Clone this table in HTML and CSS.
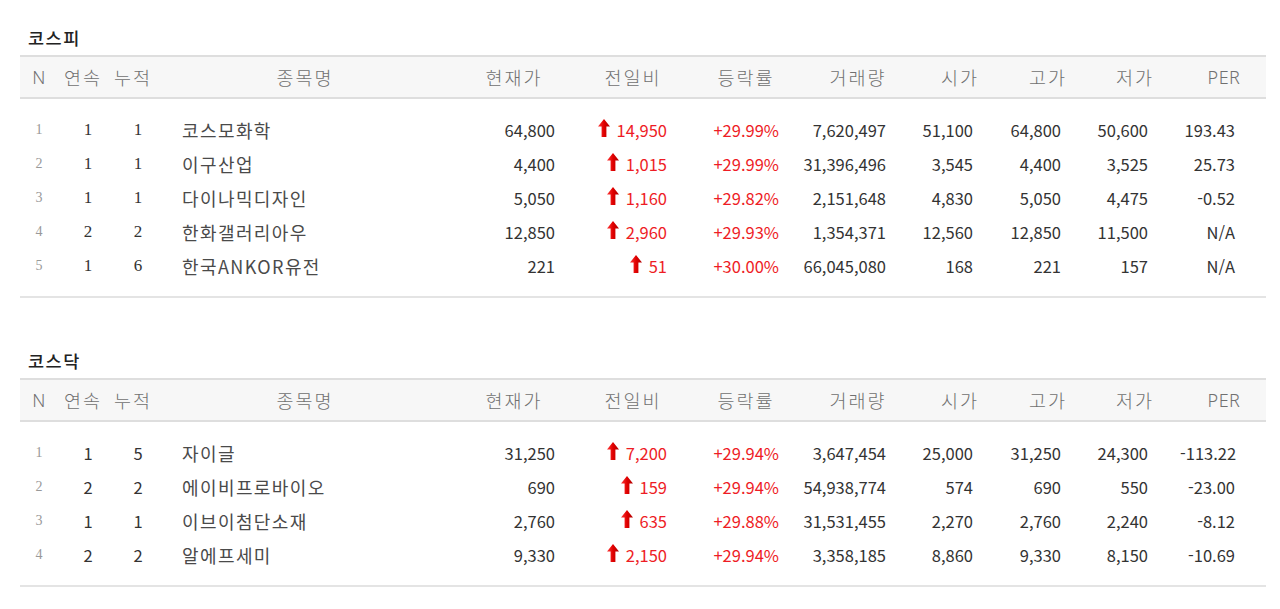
FILE: index.html
```html
<!DOCTYPE html>
<html lang="ko">
<head>
<meta charset="utf-8">
<title>상한가</title>
<link rel="stylesheet" href="styles.css">
</head>
<body>
<svg width="0" height="0" class="defs" aria-hidden="true">
  <defs>
    <linearGradient id="upg" x1="0" y1="0" x2="1" y2="0">
      <stop offset="0" stop-color="#ff3a3a"/>
      <stop offset="0.5" stop-color="#e00000"/>
      <stop offset="1" stop-color="#b00000"/>
    </linearGradient>
    <symbol id="up" viewBox="0 0 12 18">
      <path d="M6 0 L12 7.5 L8.4 7.5 L8.4 18 L3.6 18 L3.6 7.5 L0 7.5 Z" fill="url(#upg)"/>
    </symbol>
  </defs>
</svg>

<div class="page">
  <section class="board board--serif">
    <h2 class="board-title">코스피</h2>
    <div class="grid head">
      <div class="h-n">N</div><div>연속</div><div>누적</div><div>종목명</div><div>현재가</div><div>전일비</div><div>등락률</div><div>거래량</div><div>시가</div><div>고가</div><div>저가</div><div class="h-n">PER</div>
    </div>
    <div class="body">
      <div class="grid row"><div class="c-n">1</div><div class="c-cnt">1</div><div class="c-cnt">1</div><div class="c-name">코스모화학</div><div class="c-num">64,800</div><div class="c-chg"><svg class="arrow"><use href="#up"/></svg>14,950</div><div class="c-rate">+29.99%</div><div class="c-num">7,620,497</div><div class="c-num">51,100</div><div class="c-num">64,800</div><div class="c-num">50,600</div><div class="c-num">193.43</div></div>
      <div class="grid row"><div class="c-n">2</div><div class="c-cnt">1</div><div class="c-cnt">1</div><div class="c-name">이구산업</div><div class="c-num">4,400</div><div class="c-chg"><svg class="arrow"><use href="#up"/></svg>1,015</div><div class="c-rate">+29.99%</div><div class="c-num">31,396,496</div><div class="c-num">3,545</div><div class="c-num">4,400</div><div class="c-num">3,525</div><div class="c-num">25.73</div></div>
      <div class="grid row"><div class="c-n">3</div><div class="c-cnt">1</div><div class="c-cnt">1</div><div class="c-name">다이나믹디자인</div><div class="c-num">5,050</div><div class="c-chg"><svg class="arrow"><use href="#up"/></svg>1,160</div><div class="c-rate">+29.82%</div><div class="c-num">2,151,648</div><div class="c-num">4,830</div><div class="c-num">5,050</div><div class="c-num">4,475</div><div class="c-num">-0.52</div></div>
      <div class="grid row"><div class="c-n">4</div><div class="c-cnt">2</div><div class="c-cnt">2</div><div class="c-name">한화갤러리아우</div><div class="c-num">12,850</div><div class="c-chg"><svg class="arrow"><use href="#up"/></svg>2,960</div><div class="c-rate">+29.93%</div><div class="c-num">1,354,371</div><div class="c-num">12,560</div><div class="c-num">12,850</div><div class="c-num">11,500</div><div class="c-num">N/A</div></div>
      <div class="grid row"><div class="c-n">5</div><div class="c-cnt">1</div><div class="c-cnt">6</div><div class="c-name">한국ANKOR유전</div><div class="c-num">221</div><div class="c-chg"><svg class="arrow"><use href="#up"/></svg>51</div><div class="c-rate">+30.00%</div><div class="c-num">66,045,080</div><div class="c-num">168</div><div class="c-num">221</div><div class="c-num">157</div><div class="c-num">N/A</div></div>
    </div>
  </section>

  <section class="board board--second">
    <h2 class="board-title">코스닥</h2>
    <div class="grid head">
      <div class="h-n">N</div><div>연속</div><div>누적</div><div>종목명</div><div>현재가</div><div>전일비</div><div>등락률</div><div>거래량</div><div>시가</div><div>고가</div><div>저가</div><div class="h-n">PER</div>
    </div>
    <div class="body">
      <div class="grid row"><div class="c-n">1</div><div class="c-cnt">1</div><div class="c-cnt">5</div><div class="c-name">자이글</div><div class="c-num">31,250</div><div class="c-chg"><svg class="arrow"><use href="#up"/></svg>7,200</div><div class="c-rate">+29.94%</div><div class="c-num">3,647,454</div><div class="c-num">25,000</div><div class="c-num">31,250</div><div class="c-num">24,300</div><div class="c-num">-113.22</div></div>
      <div class="grid row"><div class="c-n">2</div><div class="c-cnt">2</div><div class="c-cnt">2</div><div class="c-name">에이비프로바이오</div><div class="c-num">690</div><div class="c-chg"><svg class="arrow"><use href="#up"/></svg>159</div><div class="c-rate">+29.94%</div><div class="c-num">54,938,774</div><div class="c-num">574</div><div class="c-num">690</div><div class="c-num">550</div><div class="c-num">-23.00</div></div>
      <div class="grid row"><div class="c-n">3</div><div class="c-cnt">1</div><div class="c-cnt">1</div><div class="c-name">이브이첨단소재</div><div class="c-num">2,760</div><div class="c-chg"><svg class="arrow"><use href="#up"/></svg>635</div><div class="c-rate">+29.88%</div><div class="c-num">31,531,455</div><div class="c-num">2,270</div><div class="c-num">2,760</div><div class="c-num">2,240</div><div class="c-num">-8.12</div></div>
      <div class="grid row"><div class="c-n">4</div><div class="c-cnt">2</div><div class="c-cnt">2</div><div class="c-name">알에프세미</div><div class="c-num">9,330</div><div class="c-chg"><svg class="arrow"><use href="#up"/></svg>2,150</div><div class="c-rate">+29.94%</div><div class="c-num">3,358,185</div><div class="c-num">8,860</div><div class="c-num">9,330</div><div class="c-num">8,150</div><div class="c-num">-10.69</div></div>
    </div>
  </section>
</div>
</body>
</html>
```

FILE: styles.css
```css
html, body {
  margin: 0;
  padding: 0;
  background: #fff;
}

body {
  font-family: "Noto Sans CJK KR", "Noto Sans", sans-serif;
  font-size: 16.5px;
  color: #333;
}

.defs {
  position: absolute;
  width: 0;
  height: 0;
  overflow: hidden;
}

.page {
  padding: 26px 14px 0 20px;
}

.board-title {
  margin: 0 0 5px 8px;
  font-size: 17.5px;
  line-height: 24px;
  font-weight: 500;
  letter-spacing: 1.5px;
  color: #222;
}

.board--second {
  margin-top: 51px;
}

.grid {
  display: grid;
  grid-template-columns: 38px 50px 50px 294px 124px 114px 112px 112px 92px 84px 90px 86px;
  align-items: center;
}

.head {
  height: 40px;
  background: #f7f7f7;
  border-top: 2px solid #dedede;
  border-bottom: 2px solid #dedede;
  color: #707070;
  font-size: 18.5px;
  font-weight: 300;
  letter-spacing: 2px;
  line-height: 22px;
  text-align: center;
  white-space: nowrap;
}

.head .h-n {
  font-family: "Noto Sans", sans-serif;
  font-size: 18px;
  font-weight: 300;
  letter-spacing: 0.5px;
  color: #707070;
}

.head > div:nth-child(12) {
  padding-left: 2px;
}

.body {
  padding: 14px 0 13px;
  border-bottom: 2px solid #e4e4e4;
}

.row {
  height: 34px;
  line-height: 20px;
}

.row > div {
  white-space: nowrap;
}

.c-n {
  text-align: center;
  font-family: "Liberation Serif", serif;
  font-size: 14px;
  color: #999;
}

.c-cnt {
  text-align: center;
  padding-left: 10px;
  color: #333;
}

.board--serif .c-cnt {
  font-family: "Liberation Serif", serif;
  font-size: 17px;
}

.c-name {
  padding-left: 24px;
  font-size: 18px;
  font-weight: 400;
  letter-spacing: 1.4px;
  color: #4a4a4a;
}

.c-num,
.c-chg,
.c-rate {
  text-align: right;
}

.c-chg,
.c-rate {
  color: #ee1c25;
}

.c-chg {
  display: flex;
  justify-content: flex-end;
  align-items: center;
}

.arrow {
  width: 12px;
  height: 18px;
  margin: -4px 7px 0 0;
  flex: none;
}

/* right paddings per column */
.row > div:nth-child(5)  { padding-right: 21px; }
.row > div:nth-child(6)  { padding-right: 23px; }
.row > div:nth-child(7)  { padding-right: 23px; }
.row > div:nth-child(8)  { padding-right: 28px; }
.row > div:nth-child(9)  { padding-right: 33px; }
.row > div:nth-child(10) { padding-right: 29px; }
.row > div:nth-child(11) { padding-right: 32px; }
.row > div:nth-child(12) { padding-right: 31px; }
```
